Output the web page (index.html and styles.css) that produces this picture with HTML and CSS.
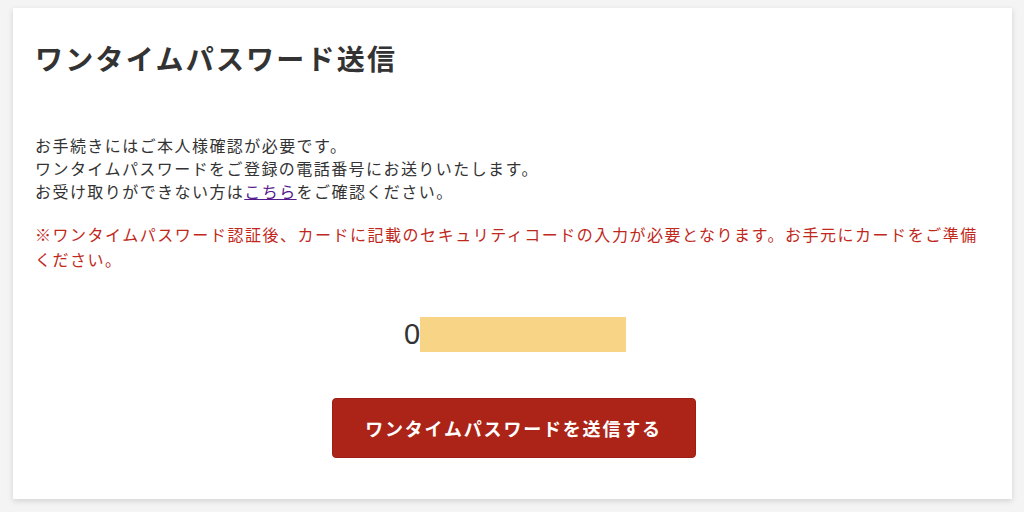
FILE: index.html
```html
<!DOCTYPE html>
<html lang="ja">
<head>
<meta charset="utf-8">
<title>ワンタイムパスワード送信</title>
<link rel="stylesheet" href="styles.css">
</head>
<body>
<main class="card">
  <h1 class="title">ワンタイムパスワード送信</h1>
  <div class="lead">
    <p class="lead-line">お手続きにはご本人様確認が必要です。</p>
    <p class="lead-line">ワンタイムパスワードをご登録の電話番号にお送りいたします。</p>
    <p class="lead-line">お受け取りができない方は<a class="link" href="#">こちら</a>をご確認ください。</p>
  </div>
  <p class="notice">※ワンタイムパスワード認証後、カードに記載のセキュリティコードの入力が必要となります。お手元にカードをご準備ください。</p>
  <div class="phone">
    <span class="phone-digit">0</span><span class="phone-mask"></span>
  </div>
  <div class="actions">
    <button class="send-btn" type="button">ワンタイムパスワードを送信する</button>
  </div>
</main>
</body>
</html>
```

FILE: styles.css
```css
html, body {
  margin: 0;
  padding: 0;
}
body {
  background: #f4f4f4;
  width: 1024px;
  height: 512px;
  padding: 8px 12px 13px 13px;
  box-sizing: border-box;
  font-family: "Noto Sans CJK JP", "Noto Sans", sans-serif;
  color: #333333;
}
.card {
  background: #ffffff;
  height: 100%;
  box-sizing: border-box;
  box-shadow: 0 2px 6px rgba(0, 0, 0, 0.14);
  padding: 28px 22px 0 22px;
  display: flex;
  flex-direction: column;
}
.title {
  margin: 0;
  font-size: 28px;
  line-height: 44px;
  font-weight: 700;
  letter-spacing: 0.08em;
  color: #333333;
}
.lead {
  margin-top: 54px;
}
.lead-line {
  margin: 0;
  font-size: 16px;
  line-height: 23px;
  letter-spacing: 0.09em;
}
.link {
  color: #551a8b;
  text-decoration: underline;
}
.notice {
  margin: 19px 0 0 0;
  font-size: 16px;
  line-height: 25px;
  letter-spacing: 0.095em;
  color: #c0281c;
}
.phone {
  margin-top: 44px;
  display: flex;
  justify-content: center;
  align-items: center;
  height: 36px;
  padding-left: 5px;
}
.phone-digit {
  font-family: "Liberation Sans", Arial, sans-serif;
  font-size: 29px;
  color: #333333;
  line-height: 36px;
}
.phone-mask {
  display: block;
  width: 206px;
  height: 35px;
  background: #f8d586;
}
.actions {
  margin-top: 46px;
  display: flex;
  justify-content: center;
  padding-left: 2px;
}
.send-btn {
  width: 364px;
  height: 60px;
  border: 1px solid #9c1e14;
  border-radius: 4px;
  background: #ac2418;
  color: #ffffff;
  font-family: "Noto Sans CJK JP", "Noto Sans", sans-serif;
  font-size: 18px;
  font-weight: 700;
  letter-spacing: 0.1em;
  padding: 0;
  cursor: pointer;
}
```
